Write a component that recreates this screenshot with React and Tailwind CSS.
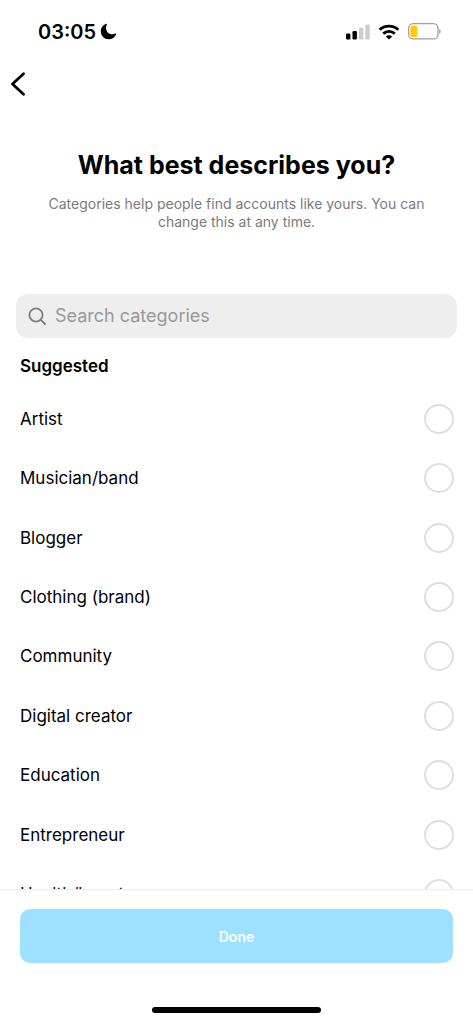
import React, { useState } from "react";

const categories = [
  "Artist",
  "Musician/band",
  "Blogger",
  "Clothing (brand)",
  "Community",
  "Digital creator",
  "Education",
  "Entrepreneur",
  "Health/beauty",
];

const StatusBar = () => (
  <div className="flex h-[63px] items-center justify-between pl-[38px] pr-8">
    <div className="flex items-center gap-1">
      <span className="text-[20px] font-semibold leading-6">03:05</span>
      <svg viewBox="0 0 17 17" className="h-[17px] w-[17px]" aria-hidden="true">
        <path
          d="M6.3 0.8C3 1.9 0.8 4.9 0.8 8.3c0 4.5 3.6 8 8 8 3.3 0 6.2-2 7.4-5.1.2-.5-.2-.8-.6-.6-1 .5-2 .7-3.1.7-3.9 0-6.5-2.7-6.5-6.5 0-1.2.3-2.3.9-3.3.3-.5-.1-.9-.6-.7Z"
          fill="#000"
        />
      </svg>
    </div>
    <div className="flex items-center gap-2">
      <svg viewBox="0 0 24 16" className="h-4 w-6" aria-hidden="true">
        <rect x="0" y="9.5" width="4.4" height="6" rx="1.2" />
        <rect x="6.5" y="7" width="4.4" height="8.5" rx="1.2" />
        <rect x="13" y="3.7" width="4.4" height="11.8" rx="1.2" fill="#cccccc" />
        <rect x="19.3" y="0.5" width="4.4" height="15" rx="1.2" fill="#cccccc" />
      </svg>
      <svg viewBox="0 0 22 16" className="h-4 w-[22px]" fill="none" stroke="#000" aria-hidden="true">
        <path d="M1.7 5.8C6.9.9 15.1.9 20.3 5.8" strokeWidth="2.9" />
        <path d="M5.2 9.6c3.3-3 8.3-3 11.6 0" strokeWidth="2.9" />
        <path d="M7.8 12.4c1.8-1.6 4.6-1.6 6.4 0L11 15.6Z" fill="#000" stroke="none" />
      </svg>
      <svg viewBox="0 0 33 17" className="h-[17px] w-[33px]" aria-hidden="true">
        <rect x="0.7" y="0.7" width="29.3" height="15.2" rx="4.5" fill="none" stroke="#a0a0a0" strokeWidth="1.3" />
        <rect x="2.4" y="2.4" width="7" height="11.8" rx="2.5" fill="#ffcc00" />
        <path d="M31.3 6v4.8c1.8-.8 1.8-4 0-4.8Z" fill="#8e8e8e" />
      </svg>
    </div>
  </div>
);

const CategoryRow = ({ name, checked, onSelect }) => (
  <label className="flex items-center justify-between pl-5 pr-[19px]">
    <span className="text-[17px] leading-6">{name}</span>
    <input
      type="radio"
      name="category"
      checked={checked}
      onChange={onSelect}
      className="h-[30px] w-[30px] appearance-none rounded-full border-2 border-[#dbdfe2] bg-white checked:border-8 checked:border-[#0095f6]"
    />
  </label>
);

export default function App() {
  const [query, setQuery] = useState("");
  const [selected, setSelected] = useState(null);

  const visible = categories.filter((name) =>
    name.toLowerCase().includes(query.toLowerCase())
  );

  return (
    <div className="flex h-screen flex-col bg-white font-['Inter',sans-serif] text-black">
      <StatusBar />

      <header className="flex h-[42px] items-center pl-[10px]">
        <button type="button" aria-label="Back">
          <svg viewBox="0 0 16 24" className="h-6 w-4" fill="none" stroke="#000" strokeWidth="2.8" strokeLinecap="round" strokeLinejoin="round" aria-hidden="true">
            <path d="M13.5 1.7 2.5 12l11 10.3" />
          </svg>
        </button>
      </header>

      <main className="flex min-h-0 flex-1 flex-col overflow-hidden">
        <div className="px-10 pt-11 text-center">
          <h1 className="text-[25px] font-bold leading-8">What best describes you?</h1>
          <p className="mt-[14px] text-[14px] leading-[18px] text-[#7b7b7b]">
            Categories help people find accounts like yours. You can change this at any time.
          </p>
        </div>

        <div className="mx-4 mt-[63px] flex h-11 shrink-0 items-center gap-[9px] rounded-xl bg-[#eeeeee] px-3">
          <svg viewBox="0 0 18 18" className="h-[18px] w-[18px]" fill="none" stroke="#7c7c7c" strokeWidth="1.8" strokeLinecap="round" aria-hidden="true">
            <circle cx="8" cy="8" r="6.6" />
            <path d="m12.8 12.8 4.2 4.2" />
          </svg>
          <input
            type="text"
            aria-label="Search categories"
            placeholder="Search categories"
            value={query}
            onChange={(e) => setQuery(e.target.value)}
            className="min-w-0 flex-1 bg-transparent text-[18px] leading-6 outline-none placeholder:text-[#98989b]"
          />
        </div>

        <h2 className="mt-4 px-5 text-[17px] font-semibold leading-6">Suggested</h2>

        <div className="mt-[11px] grid min-h-[535px] shrink-0 auto-rows-fr">
          {visible.map((name) => (
            <CategoryRow
              key={name}
              name={name}
              checked={selected === name}
              onSelect={() => setSelected(name)}
            />
          ))}
        </div>
      </main>

      <footer className="border-t border-[#ededed] bg-white px-5 pb-[10px] pt-[19px]">
        <button
          type="button"
          className="h-[54px] w-full rounded-[10px] bg-[#9de0ff] text-[14px] font-semibold text-white"
        >
          Done
        </button>
        <div className="mx-auto mt-11 h-[6px] w-[169px] rounded-full bg-black" />
      </footer>
    </div>
  );
}
